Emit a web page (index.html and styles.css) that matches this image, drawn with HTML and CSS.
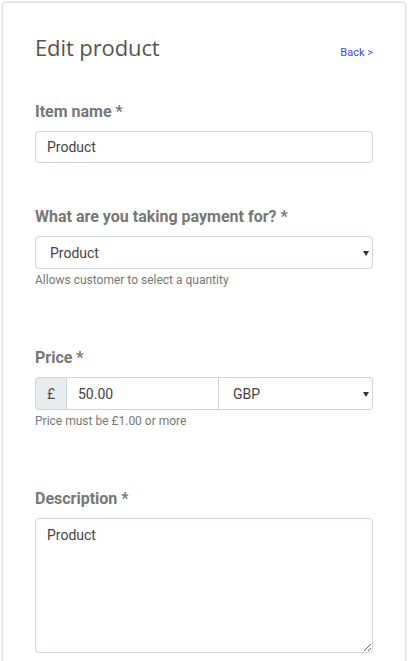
FILE: index.html
```html
<!DOCTYPE html>
<html>
<head>
<meta charset="utf-8">
<link rel="stylesheet" href="styles.css">
</head>
<body>
<div class="card">
  <div class="header">
    <h1 class="title">Edit product</h1>
    <a class="back" href="#">Back &gt;</a>
  </div>

  <div class="group">
    <label class="label">Item name *</label>
    <input class="input" type="text" value="Product">
  </div>

  <div class="group">
    <label class="label">What are you taking payment for? *</label>
    <div class="select-wrap">
      <select class="select"><option>Product</option></select>
    </div>
    <div class="help">Allows customer to select a quantity</div>
  </div>

  <div class="group">
    <label class="label">Price *</label>
    <div class="input-group">
      <span class="addon">£</span>
      <input class="input price" type="text" value="50.00">
      <div class="select-wrap currency">
        <select class="select"><option>GBP</option></select>
      </div>
    </div>
    <div class="help">Price must be £1.00 or more</div>
  </div>

  <div class="group">
    <label class="label">Description *</label>
    <textarea class="textarea">Product</textarea>
  </div>
</div>
</body>
</html>
```

FILE: styles.css
```css
html, body {
  margin: 0;
  padding: 0;
  background: #fff;
}
body {
  padding: 2px 2px 0 2px;
  font-family: Roboto, "Liberation Sans", sans-serif;
}
.card {
  border: 1px solid #e2e2e2;
  box-shadow: 0 0 0 1px #eeeeee;
  border-radius: 4px;
  padding: 29px 32px 40px 32px;
  background: #fff;
}
.header {
  display: flex;
  justify-content: space-between;
  align-items: baseline;
  margin-bottom: 40px;
}
.title {
  margin: 0;
  font-family: "Open Sans", sans-serif;
  font-weight: 400;
  font-size: 22px;
  line-height: 30px;
  color: #555;
  letter-spacing: -0.1px;
}
.back {
  font-size: 11px;
  color: #4444ff;
  text-decoration: none;
}
.group {
  display: flex;
  flex-direction: column;
  margin-bottom: 44px;
}
.label {
  font-weight: 700;
  font-size: 16px;
  line-height: 20px;
  color: #777;
  margin-bottom: 9px;
}
.input, .select, .textarea {
  font-family: Roboto, "Liberation Sans", sans-serif;
  font-size: 14px;
  color: #444;
  border: 1px solid #ced4da;
  border-radius: 4px;
  background: #fff;
  box-sizing: border-box;
  margin: 0;
  outline: none;
}
.input {
  height: 32px;
  padding: 0 11px;
}
.select-wrap {
  position: relative;
}
.select-wrap::after {
  content: "";
  position: absolute;
  right: 4px;
  top: 50%;
  margin-top: -2px;
  border-left: 3px solid transparent;
  border-right: 3px solid transparent;
  border-top: 5px solid #333;
  pointer-events: none;
}
.select {
  -webkit-appearance: none;
  appearance: none;
  width: 100%;
  height: 33px;
  padding: 0 14px;
}
.help {
  font-size: 12px;
  line-height: 16px;
  color: #777;
  margin-top: 3px;
  margin-bottom: 16px;
}
.input-group {
  display: flex;
  height: 33px;
}
.addon {
  width: 31px;
  box-sizing: border-box;
  display: flex;
  align-items: center;
  justify-content: center;
  background: #e9ecef;
  border: 1px solid #ced4da;
  border-right: none;
  border-radius: 4px 0 0 4px;
  font-size: 14px;
  color: #555;
}
.input.price {
  width: 153px;
  height: 33px;
  border-radius: 0;
  padding: 0 11px;
}
.currency {
  flex: 1;
}
.currency .select {
  border-left: none;
  border-radius: 0 4px 4px 0;
}
.textarea {
  height: 135px;
  padding: 7px 11px;
  resize: vertical;
  line-height: 18px;
}
```
